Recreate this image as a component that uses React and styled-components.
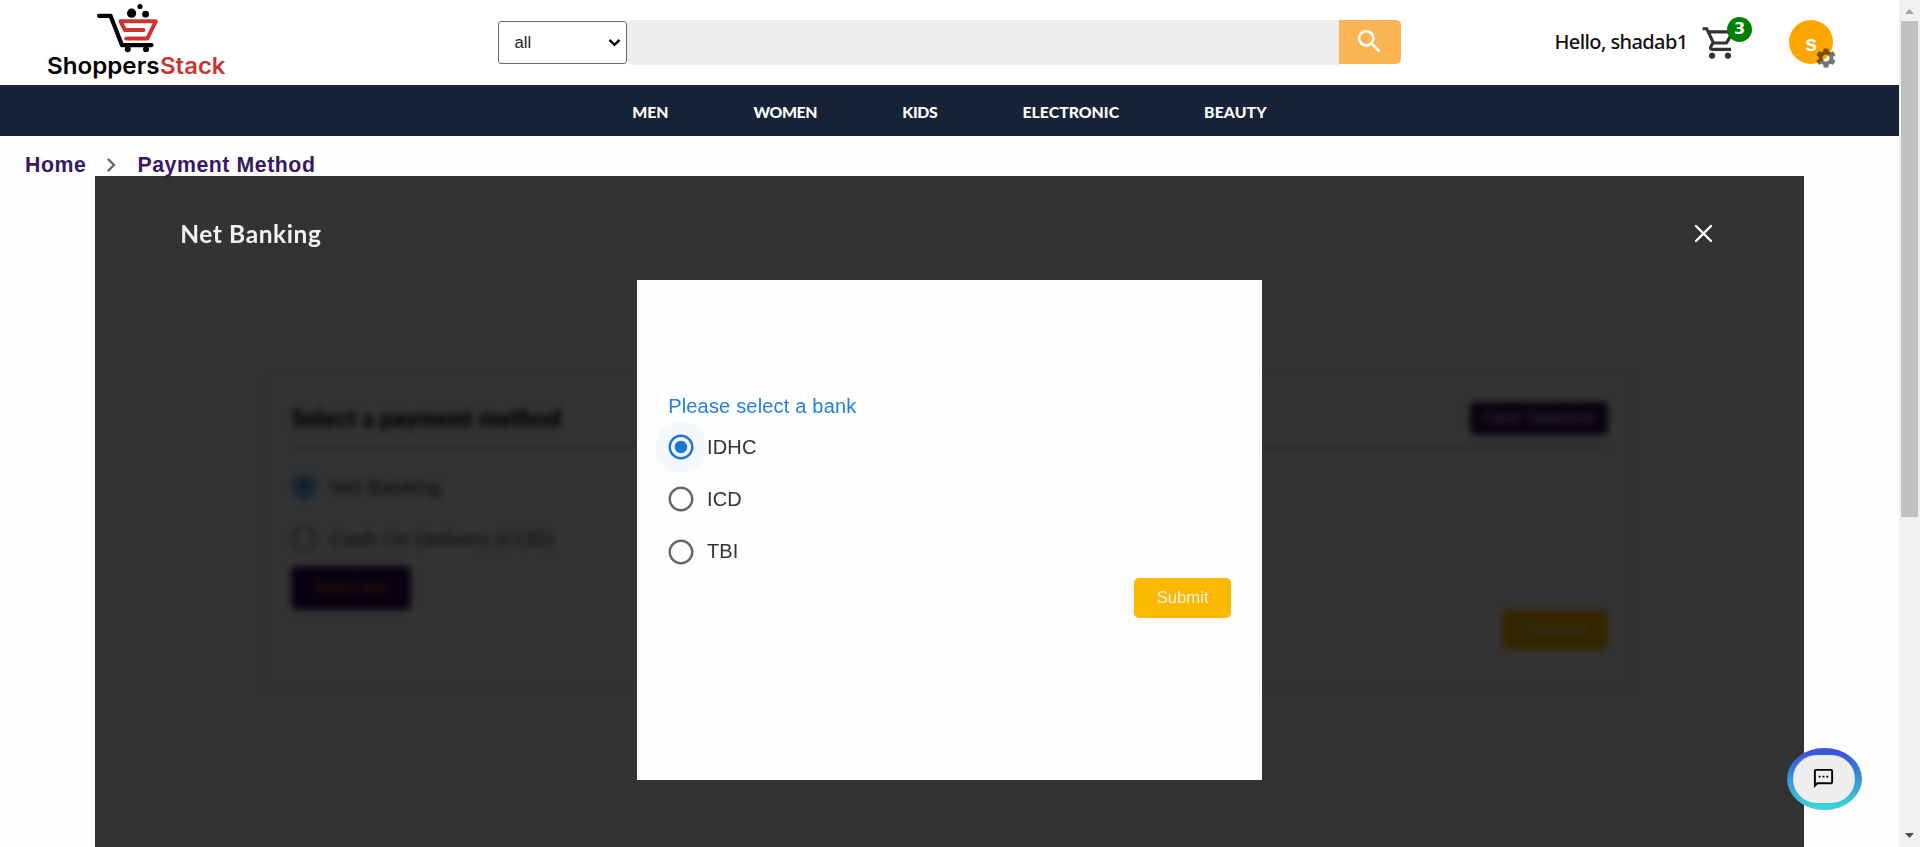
import React from "react";
import styled, { createGlobalStyle, css } from "styled-components";
import {
  MdSearch,
  MdOutlineShoppingCart,
  MdSettings,
  MdNavigateNext,
  MdRadioButtonUnchecked,
  MdRadioButtonChecked,
  MdOutlineSms,
} from "react-icons/md";

const sans = `"Liberation Sans", Arial, sans-serif`;
const round = `Lato, "Noto Sans", sans-serif`;

const GlobalStyle = createGlobalStyle`
  * { box-sizing: border-box; }
  body { margin: 0; background: #fdfdfd; font-family: ${sans}; overflow: hidden; }
  button { font-family: inherit; border: 0; padding: 0; cursor: pointer; }
  svg { display: block; flex: none; }
`;

const Window = styled.div`
  display: grid;
  grid-template-columns: 1fr 21px;
  height: 847px;
  overflow: hidden;
`;

const Page = styled.div`
  display: flex;
  flex-direction: column;
  min-width: 0;
  height: 847px;
`;

/* Header */
const Header = styled.header`
  display: flex;
  height: 85px;
  background: #fff;
`;

const LogoLink = styled.a`
  width: 498px;
  padding-left: 40px;
`;

const SearchBar = styled.form`
  display: flex;
  align-items: flex-start;
  width: 903px;
  padding-top: 20px;
`;

const Category = styled.div`
  display: flex;
  align-items: center;
  justify-content: space-between;
  width: 129px;
  height: 43px;
  margin-top: 1px;
  padding: 0 5px 0 15.5px;
  border: 1px solid #6b6b6b;
  border-radius: 3px;
  background: #fff;
  color: #222;
  font-size: 16.7px;
`;

const SearchInput = styled.input`
  width: 712px;
  height: 45px;
  border: 0;
  border-radius: 5px 0 0 5px;
  background: #eee;
  outline: 0;
`;

const SearchButton = styled.button`
  display: flex;
  width: 62px;
  height: 44px;
  padding: 6px 0 0 15px;
  border-radius: 0 5px 5px 0;
  background: #fbb454;
  color: #fff;
  font-size: 31px;
`;

const UserArea = styled.div`
  display: flex;
  flex: 1;
  padding-left: 153.5px;
`;

const Greeting = styled.span`
  width: 146.5px;
  padding-top: 28px;
  color: #111;
  font: 500 20px/28px "Noto Sans", sans-serif;
  letter-spacing: -0.6px;
  white-space: nowrap;
`;

const CartButton = styled.div`
  position: relative;
  height: 62px;
  width: 88px;
  padding-top: 24px;
  color: #333;
  font-size: 38px;
`;

const CartBadge = styled.span`
  position: absolute;
  left: 26px;
  top: 17px;
  width: 25px;
  height: 25px;
  border-radius: 50%;
  background: #008000;
  color: #fff;
  font: bold 16px/24px "DejaVu Sans", sans-serif;
  text-align: center;
`;

const Avatar = styled.div`
  position: relative;
  width: 44px;
  height: 44px;
  margin-top: 20px;
  border-radius: 50%;
  background: #ffa500;
  color: #fff;
  font: bold 22px/48px ${sans};
  text-align: center;
`;

const Gear = styled.span`
  position: absolute;
  left: 25.3px;
  top: 25.7px;
  color: rgba(0, 0, 0, 0.54);
  font-size: 24px;
`;

/* Category navigation */
const Nav = styled.nav`
  display: flex;
  flex: none;
  align-items: center;
  justify-content: center;
  gap: 85px;
  height: 51px;
  padding-top: 2px;
  background: #172337;
`;

const NavItem = styled.a`
  color: #fff;
  font: 900 15.8px/20px ${round};
  letter-spacing: ${(p) => p.$track || 0}px;
`;

/* Breadcrumbs */
const Breadcrumbs = styled.div`
  display: flex;
  flex: none;
  align-items: center;
  height: 40px;
  padding: 17px 0 0 25px;
  color: #666;
  font-size: 28px;

  svg { margin: 0 12px 0 11px; }
`;

const Crumb = styled.a`
  color: #371961;
  font: bold 21.3px/24px ${sans};
  letter-spacing: 0.55px;
`;

/* Payment card */
const Main = styled.main`
  position: relative;
  flex: 1;
  padding: 199px 267px 0;
`;

const PaymentCard = styled.section`
  display: flex;
  flex-direction: column;
  height: 312px;
  padding: 27px 24px 0;
  border-radius: 5px;
  background: #fff;
  box-shadow: 0 1px 4px rgba(0, 0, 0, 0.2), 0 1px 3px rgba(0, 0, 0, 0.12);
`;

const CardHead = styled.div`
  display: flex;
  align-items: center;
  justify-content: space-between;
  height: 46px;
  padding-bottom: 12px;
  border-bottom: 2px solid #b4b4b4;
`;

const CardTitle = styled.h2`
  margin: 0;
  color: #000;
  font: 900 24px/34px ${round};
  letter-spacing: -0.1px;
`;

const ActionButton = styled.button`
  width: ${(p) => p.$w}px;
  height: ${(p) => p.$h}px;
  flex: none;
  border-radius: 5px;
  background: ${(p) => p.$bg};
  color: ${(p) => p.$fg || "#eee"};
  font-size: 16.67px;
  ${(p) => p.$end && css`align-self: flex-end;`}
`;

const CardOptions = styled.div`
  padding-top: 13px;
`;

const Option = styled.label`
  display: flex;
  align-items: center;
  height: 52.3px;
  color: #333;
  font-size: 20px;
  letter-spacing: 0.19px;
`;

const RadioMark = styled.span`
  display: grid;
  place-items: center;
  width: 52px;
  height: 52px;
  margin-left: -13.2px;
  border-radius: 50%;
  background: ${(p) => (p.$focus ? "#f4f8fc" : "transparent")};
  color: ${(p) => (p.$checked ? "#1976d2" : "#666")};
  font-size: 30px;
`;

/* Net banking overlay */
const Overlay = styled.div`
  position: absolute;
  inset: 0 94.95px 0 95.2px;
  background: rgba(0, 0, 0, 0.8);
  backdrop-filter: blur(3.75px);
`;

const OverlayHead = styled.div`
  display: flex;
  align-items: center;
  justify-content: space-between;
  height: 104px;
  padding: 11px 91.3px 0 85px;
`;

const OverlayTitle = styled.h2`
  margin: 0;
  color: #f1f1f1;
  font: bold 24.5px/30px ${round};
  letter-spacing: 0.6px;
`;

const BankDialog = styled.div`
  display: flex;
  flex-direction: column;
  justify-content: center;
  width: 625px;
  height: 500px;
  margin: 0 auto;
  padding: 0 31px 50px;
  background: #fdfdfd;
`;

const DialogLabel = styled.div`
  height: 29px;
  color: #2680dc;
  font-size: 20px;
  line-height: 29px;
  letter-spacing: 0.19px;
`;

/* Floating chat button */
const ChatButton = styled.button`
  position: absolute;
  left: 1787px;
  top: 572px;
  width: 75px;
  height: 62px;
  padding: 7px 7px 7px 6px;
  border-radius: 50%;
  background: linear-gradient(#3b55d9 8%, #3bcfd6 92%);
`;

const ChatFace = styled.span`
  display: grid;
  place-items: center;
  height: 48px;
  padding: 0 2px 2px 0;
  border-radius: 25px;
  background: #eee;
  color: #000;
  font-size: 23px;
`;

/* Scrollbar */
const ScrollTrack = styled.div`
  display: flex;
  flex-direction: column;
  align-items: center;
  height: 847px;
  padding: 9px 0;
  background: #f1f1f1;
`;

const ScrollThumb = styled.div`
  width: 17px;
  height: 496px;
  margin: 7px 1px auto 0;
  background: #c1c1c1;
`;

function Logo() {
  return (
    <svg width="200" height="85" viewBox="40 0 200 85" fill="none">
      <path
        d="M99 15.8h11.5L122 45.2h29.5"
        stroke="#000"
        strokeWidth="4.2"
        strokeLinecap="round"
        strokeLinejoin="round"
      />
      <circle cx="127.8" cy="49.2" r="3" fill="#000" />
      <circle cx="146" cy="49.2" r="3" fill="#000" />
      <circle cx="131.6" cy="13.2" r="4.6" fill="#000" />
      <circle cx="140" cy="6.5" r="2.6" fill="#000" />
      <circle cx="145.6" cy="14.2" r="3.4" fill="#000" />
      <path
        d="M143.5 30H125L120.5 21.3H155.8L147.3 38.6H126.2"
        stroke="#cb3433"
        strokeWidth="4"
        strokeLinecap="round"
        strokeLinejoin="round"
      />
      <text x="47" y="74" textLength="112.5" lengthAdjust="spacingAndGlyphs" fill="#000" fontFamily="Inter, sans-serif" fontWeight="600" fontSize="22.5">Shoppers</text>
      <text x="160" y="74" textLength="65.5" lengthAdjust="spacingAndGlyphs" fill="#cb3433" fontFamily="Inter, sans-serif" fontWeight="600" fontSize="22.5">Stack</text>
    </svg>
  );
}

function Radio({ checked, focus, children }) {
  return (
    <Option>
      <RadioMark $checked={checked} $focus={focus}>
        {checked ? <MdRadioButtonChecked /> : <MdRadioButtonUnchecked />}
      </RadioMark>
      {children}
    </Option>
  );
}

export default function App() {
  return (
    <Window>
      <GlobalStyle />
      <Page>
        <Header>
          <LogoLink>
            <Logo />
          </LogoLink>
          <SearchBar>
            <Category>
              all
              <svg width="13" height="9" viewBox="0 0 13 9" fill="none">
                <path d="M1.5 1.8l5 5 5-5" stroke="#000" strokeWidth="2.4" />
              </svg>
            </Category>
            <SearchInput aria-label="Search" />
            <SearchButton type="button">
              <MdSearch />
            </SearchButton>
          </SearchBar>
          <UserArea>
            <Greeting>Hello, shadab1</Greeting>
            <CartButton>
              <MdOutlineShoppingCart />
              <CartBadge>3</CartBadge>
            </CartButton>
            <Avatar>
              s
              <Gear>
                <MdSettings />
              </Gear>
            </Avatar>
          </UserArea>
        </Header>
        <Nav>
          <NavItem $track={-0.1}>MEN</NavItem>
          <NavItem $track={-0.35}>WOMEN</NavItem>
          <NavItem $track={-0.3}>KIDS</NavItem>
          <NavItem $track={0.02}>ELECTRONIC</NavItem>
          <NavItem $track={0.08}>BEAUTY</NavItem>
        </Nav>
        <Breadcrumbs>
          <Crumb>Home</Crumb>
          <MdNavigateNext />
          <Crumb>Payment Method</Crumb>
        </Breadcrumbs>
        <Main>
          <PaymentCard>
            <CardHead>
              <CardTitle>Select a payment method</CardTitle>
              <ActionButton $w={138} $h={33} $bg="#29094f">Clear Selection</ActionButton>
            </CardHead>
            <CardOptions>
              <Radio checked>Net Banking</Radio>
              <Radio>Cash On Delivery (COD)</Radio>
            </CardOptions>
            <ActionButton $w={120} $h={44} $bg="#29094f" $fg="#ff7a20">Add Card</ActionButton>
            <ActionButton $w={106} $h={40} $bg="#fbb900" $end>Proceed</ActionButton>
          </PaymentCard>
          <Overlay>
            <OverlayHead>
              <OverlayTitle>Net Banking</OverlayTitle>
              <svg width="19" height="19" viewBox="0 0 19 19">
                <path d="M2 2l15 15M17 2L2 17" stroke="#fff" strokeWidth="2.4" strokeLinecap="round" />
              </svg>
            </OverlayHead>
            <BankDialog>
              <DialogLabel>Please select a bank</DialogLabel>
              <Radio checked focus>IDHC</Radio>
              <Radio>ICD</Radio>
              <Radio>TBI</Radio>
              <ActionButton $w={97} $h={40} $bg="#fbb900" $end>Submit</ActionButton>
            </BankDialog>
          </Overlay>
          <ChatButton>
            <ChatFace>
              <MdOutlineSms />
            </ChatFace>
          </ChatButton>
        </Main>
      </Page>
      <ScrollTrack>
        <svg width="9" height="5" viewBox="0 0 9 5">
          <path d="M0 5L4.5 0 9 5z" fill="#a3a3a3" />
        </svg>
        <ScrollThumb />
        <svg width="9" height="5" viewBox="0 0 9 5">
          <path d="M0 0h9L4.5 5z" fill="#505050" />
        </svg>
      </ScrollTrack>
    </Window>
  );
}
